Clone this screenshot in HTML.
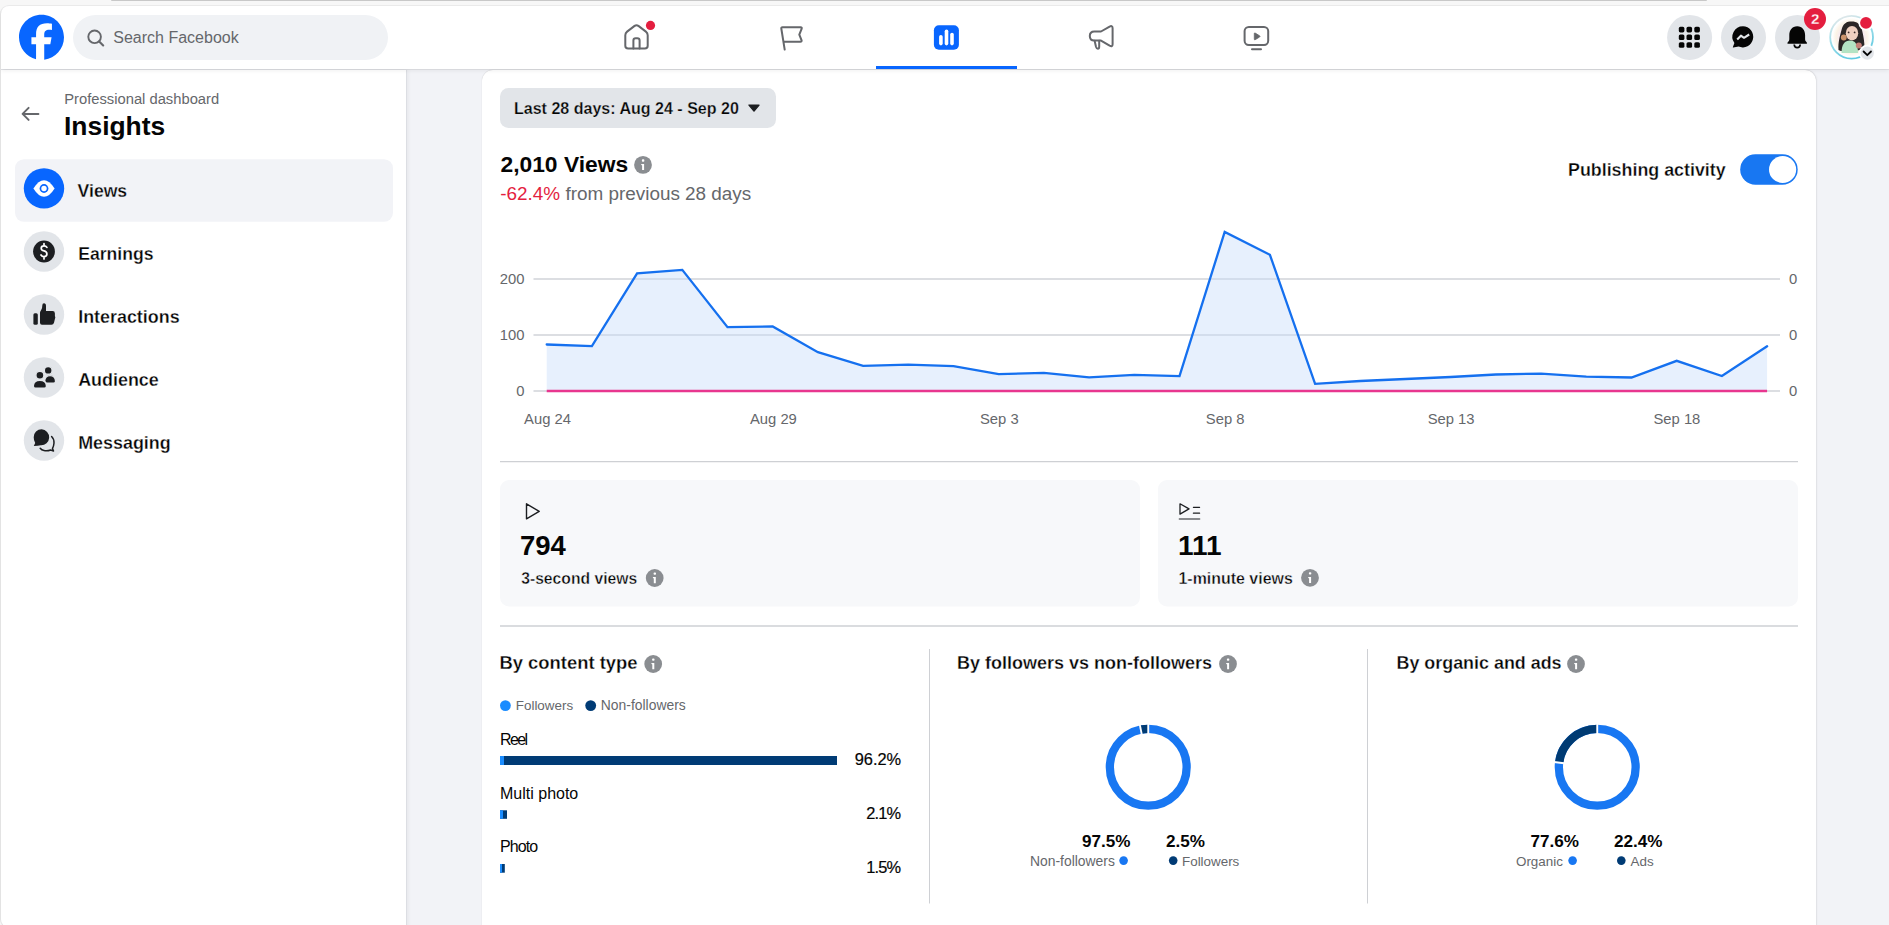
<!DOCTYPE html>
<html><head><meta charset="utf-8">
<style>
*{margin:0;padding:0;box-sizing:border-box}
html,body{width:1889px;height:925px;overflow:hidden}
body{background:#f7f7f7;font-family:"Liberation Sans",sans-serif;color:#050505;position:relative}
.a{position:absolute}
.t{position:absolute;white-space:nowrap;line-height:1}
</style></head><body>
<!-- browser frame -->
<div class="a" style="left:0;top:0;width:1889px;height:6px;background:#f7f7f7"></div>
<div class="a" style="left:110.6px;top:0;width:1596px;height:1.2px;background:#c8c8c8;border-radius:0 0 1.5px 1.5px"></div>
<div class="a" style="left:0;top:5px;width:1900px;height:924px;border-left:1px solid #e6e6e6;border-top:1px solid #ebebeb;border-bottom:1px solid #e6e6e6;border-top-left-radius:9px;border-bottom-left-radius:10px;background:#f2f3f7;overflow:hidden">
</div>

<!-- header -->
<div id="hdr" class="a" style="left:1px;top:6px;width:1888px;height:63px;background:#fff;border-top-left-radius:8px;box-shadow:0 0.6px 0 rgba(0,0,0,0.13), 0 2px 4px rgba(0,0,0,0.06);z-index:10"></div>


<!-- header content -->
<svg class="a" style="left:0;top:0;z-index:11" width="1889" height="70" viewBox="0 0 1889 70">
  <g transform="translate(19,14.8) scale(1.25)">
    <path d="M20.181 35.87C29.094 34.791 36 27.202 36 18c0-9.941-8.059-18-18-18S0 8.059 0 18c0 8.442 5.811 15.526 13.652 17.471L14 34h5.5l.681 1.87Z" fill="#0866FF"/>
    <path d="M13.651 35.471v-11.97H9.936V18h3.715v-2.37c0-6.127 2.772-8.964 8.784-8.964 1.138 0 3.103.223 3.91.446v4.983c-.425-.043-1.167-.065-2.081-.065-2.952 0-4.09 1.116-4.09 4.025V18h5.883l-1.008 5.5h-4.867v12.37a18.183 18.183 0 0 1-6.53-.399Z" fill="#fff"/>
  </g>
  <rect x="73" y="15" width="315" height="45" rx="22.5" fill="#f0f2f5"/>
  <circle cx="94.6" cy="36.8" r="6.3" fill="none" stroke="#65676b" stroke-width="1.9"/>
  <line x1="99.2" y1="41.4" x2="103.2" y2="45.4" stroke="#65676b" stroke-width="2.1" stroke-linecap="round"/>
  <!-- house -->
  <g fill="none" stroke="#65676b" stroke-width="2" stroke-linejoin="round" stroke-linecap="round">
    <path d="M625.3,45.8 V35.2 Q625.3,33 627.1,31.6 L634.6,25.9 Q636.5,24.5 638.4,25.9 L645.9,31.6 Q647.7,33 647.7,35.2 V45.8 Q647.7,48.6 644.9,48.6 H628.1 Q625.3,48.6 625.3,45.8 Z"/>
    <path d="M633.4,48.6 V40.6 Q633.4,38.3 635.7,38.3 H637.3 Q639.6,38.3 639.6,40.6 V48.6"/>
    <path d="M784.7,49.6 L781.3,28.5 Q781.1,27.2 782.4,27.2 H800.6 Q802.1,27.3 801.7,28.7 L799.3,34.6 L801.6,40.3 Q801.9,41.8 800.4,41.8 H783.5"/>
    <path d="M1101,31.5 H1094.3 Q1089.8,31.5 1089.8,36 Q1089.8,40.6 1094.3,40.6 H1101 L1109.6,45.7 Q1112.6,47.3 1112.6,44.2 V28.3 Q1112.6,25.1 1109.6,26.6 Z"/>
    <path d="M1094.6,40.8 L1096,46.8 Q1096.6,48.8 1097.9,48.8 Q1099.2,48.8 1099.2,46.8 V40.8"/>
    <rect x="1244.6" y="26.9" width="23.6" height="18.1" rx="4.2"/>
    <line x1="1252" y1="49.3" x2="1261" y2="49.3"/>
  </g>
  <path d="M1254.3,33.6 Q1254.3,32.6 1255.2,33.1 L1259.6,35.8 Q1260.4,36.4 1259.6,37 L1255.2,39.7 Q1254.3,40.2 1254.3,39.2 Z" fill="#65676b" stroke="#65676b" stroke-width="0.8" stroke-linejoin="round"/>
  <circle cx="650.5" cy="25.4" r="4.6" fill="#e41e3f"/>
  <!-- insights -->
  <rect x="933.9" y="25.2" width="25" height="24.5" rx="5" fill="#0866ff"/>
  <g stroke="#fff" stroke-width="3.6" stroke-linecap="round">
    <line x1="940.9" y1="36.8" x2="940.9" y2="43.6"/>
    <line x1="946.5" y1="31.3" x2="946.5" y2="43.6"/>
    <line x1="952" y1="34.6" x2="952" y2="43.6"/>
  </g>
  <rect x="876" y="66" width="141" height="3" fill="#0866ff"/>
  <!-- right circles -->
  <circle cx="1689.6" cy="37.4" r="22.5" fill="#e2e5e9"/>
  <circle cx="1743.5" cy="37.4" r="22.5" fill="#e2e5e9"/>
  <circle cx="1797.5" cy="37.4" r="22.5" fill="#e2e5e9"/>
  <g fill="#050505">
    <rect x="1678.8" y="26.8" width="5.6" height="5.6" rx="1.6"/><rect x="1686.5" y="26.8" width="5.6" height="5.6" rx="1.6"/><rect x="1694.3" y="26.8" width="5.6" height="5.6" rx="1.6"/>
    <rect x="1678.8" y="34.5" width="5.6" height="5.6" rx="1.6"/><rect x="1686.5" y="34.5" width="5.6" height="5.6" rx="1.6"/><rect x="1694.3" y="34.5" width="5.6" height="5.6" rx="1.6"/>
    <rect x="1678.8" y="42.2" width="5.6" height="5.6" rx="1.6"/><rect x="1686.5" y="42.2" width="5.6" height="5.6" rx="1.6"/><rect x="1694.3" y="42.2" width="5.6" height="5.6" rx="1.6"/>
  </g>
  <path d="M1743,26.2 A10.6,10.6 0 1 1 1738.6,46.6 L1733.3,47.6 Q1732.6,47.6 1732.9,46.9 L1734.4,43 A10.6,10.6 0 0 1 1743,26.2 Z" fill="#050505"/>
  <path d="M1737.2,39.5 L1740.9,35.7 L1744,37.8 L1749.2,34.5" fill="none" stroke="#e2e5e9" stroke-width="2.1" stroke-linejoin="round" stroke-linecap="butt"/>
  <path d="M1797.2,26.2 C1792,26.2 1789.3,30.5 1789.3,35 V39.3 Q1789.3,40.8 1788.2,41.8 L1787.6,42.4 Q1786.6,43.8 1788.3,43.8 H1806.1 Q1807.8,43.8 1806.8,42.4 L1806.2,41.8 Q1805.1,40.8 1805.1,39.3 V35 C1805.1,30.5 1802.4,26.2 1797.2,26.2 Z" fill="#050505"/>
  <path d="M1794.2,44.5 Q1794.4,47.6 1797.2,47.6 Q1800,47.6 1800.2,44.5" fill="none" stroke="#050505" stroke-width="1.7"/>
  <circle cx="1815" cy="19" r="11" fill="#e41e3f"/>
  <text x="1815.3" y="24.4" text-anchor="middle" font-family="Liberation Sans" font-weight="bold" font-size="15.2" fill="#fff" stroke="#e41e3f" stroke-width="0.3">2</text>
  <!-- avatar -->
  <defs>
    <linearGradient id="ring" x1="0.2" y1="0" x2="0.6" y2="1">
      <stop offset="0" stop-color="#e6e9ea"/><stop offset="0.45" stop-color="#9fdde9"/><stop offset="1" stop-color="#5cc8e0"/>
    </linearGradient>
    <radialGradient id="avbg" cx="0.5" cy="0.5" r="0.5">
      <stop offset="0.55" stop-color="#f6e6f4"/><stop offset="0.8" stop-color="#fbf3e6"/><stop offset="1" stop-color="#ffffff"/>
    </radialGradient>
    <clipPath id="avclip"><circle cx="1851.6" cy="37.3" r="19.5"/></clipPath>
  </defs>
  <circle cx="1851.6" cy="37.3" r="21.4" fill="#fff" stroke="url(#ring)" stroke-width="1.8"/>
  <g clip-path="url(#avclip)">
    <circle cx="1851.6" cy="37.3" r="19.5" fill="url(#avbg)"/>
    <path d="M1838.5,50 C1838,42 1840,36 1841.5,30 C1843,23 1847,21.5 1851.5,21.5 C1857,21.5 1860.5,24 1862,30 C1863.5,36 1864.5,42 1864.5,48 C1862,50 1856,51 1851,51 C1845,51 1840.5,51.5 1838.5,50 Z" fill="#2b2626"/>
    <ellipse cx="1852" cy="33.2" rx="6.2" ry="7.3" fill="#eecfbf"/>
    <circle cx="1848.6" cy="32.4" r="0.9" fill="#3a2a2a"/>
    <circle cx="1854.6" cy="32.4" r="0.9" fill="#3a2a2a"/>
    <path d="M1841.5,53 C1841.5,44 1845,40.5 1850,40.5 C1855,40.5 1858,44 1858,53 Z" fill="#b3e3c4"/>
    <circle cx="1843.8" cy="37.5" r="2.9" fill="#c9926b"/>
    <circle cx="1858.8" cy="45.5" r="3" fill="#c47f78"/>
  </g>
  <circle cx="1866" cy="22.8" r="7.6" fill="#fff"/>
  <circle cx="1866" cy="22.8" r="5.9" fill="#e41e3f"/>
  <circle cx="1867.3" cy="53.1" r="8.4" fill="#fff"/>
  <circle cx="1867.3" cy="53.1" r="6.6" fill="#e2e5e9"/>
  <path d="M1863.6,51.5 L1867.3,55.2 L1871,51.5" fill="none" stroke="#050505" stroke-width="1.8" stroke-linecap="round" stroke-linejoin="round"/>
</svg>
<div class="t" style="z-index:11;left:113.3px;top:30px;font-size:16px;color:#65676b">Search Facebook</div>


<!-- sidebar -->
<div class="a" style="left:1px;top:70px;width:406px;height:858px;border-bottom-left-radius:9px;background:#fff;border-right:1px solid #dcdee3;box-shadow:1px 0 4px rgba(0,0,0,0.06)"></div>
<svg class="a" style="left:0;top:70px" width="406" height="400" viewBox="0 70 406 400">
  <path d="M38.4,113.9 H23 M28.6,107.9 L22.6,113.9 L28.6,119.9" fill="none" stroke="#65676b" stroke-width="2" stroke-linecap="round" stroke-linejoin="round"/>
  <rect x="15" y="159.2" width="378" height="62.6" rx="9" fill="#f2f3f7"/>
  <circle cx="44" cy="188.4" r="20.2" fill="#0866ff"/>
  <path d="M33.4,188.5 Q38.6,180.2 44,180.2 Q49.4,180.2 54.6,188.5 Q49.4,196.8 44,196.8 Q38.6,196.8 33.4,188.5 Z" fill="#fff"/>
  <circle cx="44" cy="188.5" r="4.4" fill="#0866ff"/>
  <circle cx="44" cy="188.5" r="2.7" fill="#fff"/>
  <circle cx="44" cy="251.5" r="20.2" fill="#e2e5e9"/>
  <circle cx="44" cy="251.5" r="10.9" fill="#1c1e21"/>
  <path d="M46.9,247.4 Q46,245.8 44,245.8 Q41.2,245.8 41.2,248.2 Q41.2,250.2 44,250.9 Q46.9,251.6 46.9,254 Q46.9,256.6 44,256.6 Q41.9,256.6 41,255 M44,243.6 V245.8 M44,256.6 V258.9" fill="none" stroke="#fff" stroke-width="1.7" stroke-linecap="round"/>
  <circle cx="44" cy="314.5" r="20.2" fill="#e2e5e9"/>
  <g fill="#1c1e21">
    <rect x="33.4" y="313.3" width="4.4" height="11.4" rx="1.5"/>
    <path d="M40,313.5 Q40,311.5 41.4,309.5 Q42.3,308 42.3,305.5 Q42.3,303.2 44,303.2 Q46,303.2 46,306 V311.1 H52.6 Q54.9,311.1 54.9,313.4 V316 Q55.8,317.5 54.9,319 L54,322.8 Q53.4,324.7 51.5,324.7 H42 Q40,324.7 40,322.7 Z"/>
  </g>
  <circle cx="44" cy="377.5" r="20.2" fill="#e2e5e9"/>
  <g fill="#1c1e21" stroke="#e2e5e9" stroke-width="1.4">
    <circle cx="48.2" cy="370.4" r="3.9"/>
    <path d="M44.6,381.2 Q45,375.6 50,375.6 Q55.3,375.6 55.6,381.2 Q55.6,383.3 53.5,383.3 H46.8 Q44.6,383.3 44.6,381.2 Z"/>
    <circle cx="39.9" cy="375.3" r="4"/>
    <path d="M33.3,386 Q33.6,380.3 39.9,380.3 Q46.2,380.3 46.5,386 Q46.5,388.2 44.3,388.2 H35.5 Q33.3,388.2 33.3,386 Z"/>
  </g>
  <circle cx="44" cy="440.5" r="20.2" fill="#e2e5e9"/>
  <path d="M51.6,436.5 Q54.2,439 54,443 Q53.7,446.5 52.5,448.5 L53.5,451 L50.6,450 Q47.5,451.2 44,450.6 Q41.6,450.2 40.2,448.3" fill="none" stroke="#1c1e21" stroke-width="1.5" stroke-linejoin="round" stroke-linecap="round"/>
  <path d="M41.6,429.3 A7.9,7.9 0 1 1 40.8,445.2 Q38,445.7 33.8,445.9 L35.2,443 Q33.7,440.7 33.7,437.2 A7.9,7.9 0 0 1 41.6,429.3 Z" fill="#1c1e21"/>
</svg>
<div class="t" style="left:64.2px;top:92px;font-size:14.75px;color:#65676b">Professional dashboard</div>
<div class="t" style="left:64px;top:113.2px;font-size:26.4px;font-weight:bold;color:#050505">Insights</div>
<div class="t" style="left:77.6px;top:183.3px;font-size:17.6px;font-weight:bold;color:#050505;-webkit-text-stroke:0.28px #f2f3f7">Views</div>
<div class="t" style="left:78.2px;top:246.3px;font-size:17.6px;font-weight:bold;color:#050505;-webkit-text-stroke:0.28px #fff">Earnings</div>
<div class="t" style="left:78.2px;top:309.3px;font-size:17.9px;font-weight:bold;color:#050505;-webkit-text-stroke:0.28px #fff">Interactions</div>
<div class="t" style="left:78.2px;top:372.3px;font-size:17.9px;font-weight:bold;color:#050505;-webkit-text-stroke:0.28px #fff">Audience</div>
<div class="t" style="left:78.2px;top:435.3px;font-size:17.9px;font-weight:bold;color:#050505;-webkit-text-stroke:0.28px #fff">Messaging</div>


<!-- card -->
<div class="a" style="left:481.5px;top:69.5px;width:1334.5px;height:900px;background:#fff;border-radius:11px;box-shadow:0 0 1px rgba(0,0,0,0.22), 1px 0 2px rgba(0,0,0,0.06)"></div>
<svg class="a" style="left:0;top:0" width="1889" height="925" viewBox="0 0 1889 925">
  <rect x="500" y="88" width="276" height="40" rx="8.5" fill="#e2e5e9"/>
  <path d="M749,105.1 H759 L754,111 Z" fill="#1c1e21" stroke="#1c1e21" stroke-width="1.4" stroke-linejoin="round"/>
  <g><circle cx="643" cy="164.9" r="8.9" fill="#8a8d91"/><rect x="641.9" y="159.3" width="2.4" height="2.4" rx="0.8" fill="#fff"/><path d="M641.1,164.0 H644.1 V170.1 H642.1 V165.5 Q641.1,165.20000000000002 641.1,164.0 Z" fill="#fff"/></g>
  <rect x="1740.2" y="154.2" width="57.5" height="30.5" rx="15.25" fill="#1877f2"/>
  <circle cx="1782.6" cy="169.5" r="13.6" fill="#fff"/>
  <line x1="500" y1="461.6" x2="1798" y2="461.6" stroke="#ced0d4" stroke-width="1.3"/>
  <rect x="500" y="480" width="640" height="126.5" rx="9" fill="#f7f8fa"/>
  <rect x="1158" y="480" width="640" height="126.5" rx="9" fill="#f7f8fa"/>
  <path d="M526.5,503.8 L539.2,511.4 L526.5,518.8 Z" fill="none" stroke="#1c1e21" stroke-width="1.4" stroke-linejoin="round"/>
  <path d="M1180,503.8 L1189,508.9 L1180,514.1 Z" fill="none" stroke="#1c1e21" stroke-width="1.3" stroke-linejoin="round"/>
  <path d="M1193.4,507.3 H1199.6 M1193.4,513.2 H1199.6" stroke="#1c1e21" stroke-width="1.2" stroke-linecap="round"/>
  <path d="M1179.4,519 H1199.6" stroke="#65676b" stroke-width="1.6" stroke-linecap="round"/>
  <g><circle cx="654.7" cy="578" r="8.9" fill="#8a8d91"/><rect x="653.6" y="572.4" width="2.4" height="2.4" rx="0.8" fill="#fff"/><path d="M652.8000000000001,577.1 H655.8000000000001 V583.2 H653.8000000000001 V578.6 Q652.8000000000001,578.3 652.8000000000001,577.1 Z" fill="#fff"/></g>
  <g><circle cx="1310" cy="577.8" r="8.9" fill="#8a8d91"/><rect x="1308.9" y="572.1999999999999" width="2.4" height="2.4" rx="0.8" fill="#fff"/><path d="M1308.1,576.9 H1311.1 V583.0 H1309.1 V578.4 Q1308.1,578.0999999999999 1308.1,576.9 Z" fill="#fff"/></g>
  <line x1="500" y1="626" x2="1798" y2="626" stroke="#ced0d4" stroke-width="1.7"/>
  <g><circle cx="653.2" cy="664" r="8.9" fill="#8a8d91"/><rect x="652.1" y="658.4" width="2.4" height="2.4" rx="0.8" fill="#fff"/><path d="M651.3000000000001,663.1 H654.3000000000001 V669.2 H652.3000000000001 V664.6 Q651.3000000000001,664.3 651.3000000000001,663.1 Z" fill="#fff"/></g>
  <g><circle cx="1228" cy="664" r="8.9" fill="#8a8d91"/><rect x="1226.9" y="658.4" width="2.4" height="2.4" rx="0.8" fill="#fff"/><path d="M1226.1,663.1 H1229.1 V669.2 H1227.1 V664.6 Q1226.1,664.3 1226.1,663.1 Z" fill="#fff"/></g>
  <g><circle cx="1576" cy="664" r="8.9" fill="#8a8d91"/><rect x="1574.9" y="658.4" width="2.4" height="2.4" rx="0.8" fill="#fff"/><path d="M1574.1,663.1 H1577.1 V669.2 H1575.1 V664.6 Q1574.1,664.3 1574.1,663.1 Z" fill="#fff"/></g>
  <line x1="929.5" y1="649" x2="929.5" y2="903.5" stroke="#ced0d4" stroke-width="1"/>
  <line x1="1367.5" y1="649" x2="1367.5" y2="903.5" stroke="#ced0d4" stroke-width="1"/>
  <circle cx="505.4" cy="705.6" r="5.4" fill="#1a8cff"/>
  <circle cx="590.7" cy="705.6" r="5.4" fill="#003b75"/>
  <rect x="500" y="756" width="337" height="9" fill="#003b75"/>
  <rect x="500" y="756" width="4" height="9" fill="#1a8cff"/>
  <rect x="500" y="810.3" width="7" height="8.5" fill="#003b75"/>
  <rect x="500" y="810.3" width="3" height="8.5" fill="#1a8cff"/>
  <rect x="500" y="864" width="4.8" height="8.7" fill="#003b75"/>
  <rect x="500" y="864" width="2" height="8.7" fill="#1a8cff"/>
  <circle cx="1123.6" cy="860.6" r="4.3" fill="#1877f2"/>
  <circle cx="1173.2" cy="860.6" r="4.3" fill="#003b75"/>
  <circle cx="1572.6" cy="860.6" r="4.3" fill="#1877f2"/>
  <circle cx="1621.3" cy="860.6" r="4.3" fill="#003b75"/>
</svg>
<div class="t" style="left:514px;top:99.8px;font-size:16.05px;font-weight:bold;-webkit-text-stroke:0.25px #e2e5e9">Last 28 days: Aug 24 - Sep 20</div>
<div class="t" style="left:500.5px;top:152.9px;font-size:22.8px;font-weight:bold">2,010 Views</div>
<div class="t" style="left:500.3px;top:184.5px;font-size:18.9px;color:#65676b"><span style="color:#e41e3f">-62.4%</span> from previous 28 days</div>
<div class="t" style="left:1568px;top:161.5px;font-size:17.85px;font-weight:bold;-webkit-text-stroke:0.28px #fff">Publishing activity</div>
<div class="t" style="left:520px;top:531.7px;font-size:27.5px;font-weight:bold">794</div>
<div class="t" style="left:521.2px;top:570.5px;font-size:15.7px;font-weight:bold;-webkit-text-stroke:0.38px #f7f8fa">3-second views</div>
<div class="t" style="left:1178px;top:531.8px;font-size:28px;font-weight:bold">111</div>
<div class="t" style="left:1178.5px;top:570.5px;font-size:15.95px;font-weight:bold;-webkit-text-stroke:0.38px #f7f8fa">1-minute views</div>
<div class="t" style="left:499.5px;top:653.7px;font-size:18.4px;font-weight:bold;-webkit-text-stroke:0.28px #fff">By content type</div>
<div class="t" style="left:957px;top:653.7px;font-size:18px;font-weight:bold;-webkit-text-stroke:0.28px #fff">By followers vs non-followers</div>
<div class="t" style="left:1396.5px;top:654.5px;font-size:17.9px;font-weight:bold;-webkit-text-stroke:0.28px #fff">By organic and ads</div>
<div class="t" style="left:515.8px;top:699.4px;font-size:13.4px;color:#65676b">Followers</div>
<div class="t" style="left:600.8px;top:699.4px;font-size:13.9px;color:#65676b">Non-followers</div>
<div class="t" style="left:500px;top:731.7px;font-size:16px;letter-spacing:-1.6px">Reel</div>
<div class="t" style="left:500px;top:785.6px;font-size:16px">Multi photo</div>
<div class="t" style="left:500px;top:839.3px;font-size:16px;letter-spacing:-0.9px">Photo</div>
<div class="t" style="right:987.8px;top:751px;font-size:16.4px;-webkit-text-stroke:0.2px #050505">96.2%</div>
<div class="t" style="right:988.6px;top:805px;font-size:16.4px;-webkit-text-stroke:0.2px #050505;letter-spacing:-0.8px">2.1%</div>
<div class="t" style="right:988.6px;top:859px;font-size:16.4px;-webkit-text-stroke:0.2px #050505;letter-spacing:-0.8px">1.5%</div>
<div class="t" style="left:1082px;top:833.1px;font-size:17.1px;font-weight:bold">97.5%</div>
<div class="t" style="left:1166px;top:833.1px;font-size:17.1px;font-weight:bold">2.5%</div>
<div class="t" style="left:1030px;top:854.8px;font-size:13.9px;color:#65676b">Non-followers</div>
<div class="t" style="left:1182px;top:854.8px;font-size:13.4px;color:#65676b">Followers</div>
<div class="t" style="left:1530.5px;top:833.1px;font-size:17.1px;font-weight:bold">77.6%</div>
<div class="t" style="left:1614px;top:833.1px;font-size:17.1px;font-weight:bold">22.4%</div>
<div class="t" style="left:1516px;top:854.8px;font-size:13.4px;color:#65676b">Organic</div>
<div class="t" style="left:1630.5px;top:854.8px;font-size:13.4px;color:#65676b">Ads</div>

<svg class="a" style="left:0;top:0" width="1889" height="925" viewBox="0 0 1889 925">
  <g stroke="#d0d3d9" stroke-width="1.6">
    <line x1="533.5" y1="279" x2="1780" y2="279"/>
    <line x1="533.5" y1="335" x2="1780" y2="335"/>
    <line x1="533.5" y1="391" x2="1780" y2="391"/>
  </g>
  <path d="M546.7,344.5 L591.9,346.2 L637.1,273.4 L682.3,269.9 L727.5,327.1 L772.7,326.4 L817.9,352.2 L863.1,365.9 L908.3,364.6 L953.5,366.1 L998.7,374.1 L1043.9,372.9 L1089.1,377.3 L1134.3,374.8 L1179.5,376.1 L1224.7,231.9 L1269.9,254.8 L1315.1,383.8 L1360.3,381.0 L1405.5,379.0 L1450.7,377.0 L1495.9,374.5 L1541.1,373.6 L1586.3,376.6 L1631.5,377.5 L1676.7,360.8 L1721.9,376.0 L1767.1,346.3 L1767.1,391 L546.7,391 Z" fill="#e7f0fd"/>
  <defs><clipPath id="areaclip"><path d="M546.7,344.5 L591.9,346.2 L637.1,273.4 L682.3,269.9 L727.5,327.1 L772.7,326.4 L817.9,352.2 L863.1,365.9 L908.3,364.6 L953.5,366.1 L998.7,374.1 L1043.9,372.9 L1089.1,377.3 L1134.3,374.8 L1179.5,376.1 L1224.7,231.9 L1269.9,254.8 L1315.1,383.8 L1360.3,381.0 L1405.5,379.0 L1450.7,377.0 L1495.9,374.5 L1541.1,373.6 L1586.3,376.6 L1631.5,377.5 L1676.7,360.8 L1721.9,376.0 L1767.1,346.3 L1767.1,391 L546.7,391 Z"/></clipPath></defs>
  <g stroke="#b9c3d3" stroke-width="1.3" opacity="0.55" clip-path="url(#areaclip)">
    <line x1="546.7" y1="279" x2="1767.1" y2="279"/>
    <line x1="546.7" y1="335" x2="1767.1" y2="335"/>
  </g>
  <path d="M546.7,344.5 L591.9,346.2 L637.1,273.4 L682.3,269.9 L727.5,327.1 L772.7,326.4 L817.9,352.2 L863.1,365.9 L908.3,364.6 L953.5,366.1 L998.7,374.1 L1043.9,372.9 L1089.1,377.3 L1134.3,374.8 L1179.5,376.1 L1224.7,231.9 L1269.9,254.8 L1315.1,383.8 L1360.3,381.0 L1405.5,379.0 L1450.7,377.0 L1495.9,374.5 L1541.1,373.6 L1586.3,376.6 L1631.5,377.5 L1676.7,360.8 L1721.9,376.0 L1767.1,346.3" fill="none" stroke="#1570ef" stroke-width="2.3" stroke-linejoin="miter" stroke-linecap="round"/>
  <line x1="546.7" y1="391" x2="1767.1" y2="391" stroke="#e8368f" stroke-width="2.6"/>
  <g font-family="Liberation Sans" font-size="14.8" fill="#65676b">
    <text x="524.5" y="284.3" text-anchor="end">200</text>
    <text x="524.5" y="340.3" text-anchor="end">100</text>
    <text x="524.5" y="396.3" text-anchor="end">0</text>
    <text x="1789" y="284.3">0</text>
    <text x="1789" y="340.3">0</text>
    <text x="1789" y="396.3">0</text>
    <text x="547.5" y="423.8" text-anchor="middle">Aug 24</text><text x="773.4" y="423.8" text-anchor="middle">Aug 29</text><text x="999.3" y="423.8" text-anchor="middle">Sep 3</text><text x="1225.2" y="423.8" text-anchor="middle">Sep 8</text><text x="1451.1" y="423.8" text-anchor="middle">Sep 13</text><text x="1676.9" y="423.8" text-anchor="middle">Sep 18</text>
  </g>
  <circle cx="1148.25" cy="767.3" r="38.4" fill="none" stroke="#1877f2" stroke-width="8.3"/><path d="M1140.79,729.63 A38.4,38.4 0 0 1 1148.25,728.90" fill="none" stroke="#003b73" stroke-width="8.3"/><line x1="1141.74" y1="734.44" x2="1139.80" y2="724.63" stroke="#fff" stroke-width="1.9"/><line x1="1148.25" y1="733.80" x2="1148.25" y2="723.80" stroke="#fff" stroke-width="1.9"/>
  <circle cx="1597.25" cy="767.3" r="38.4" fill="none" stroke="#1877f2" stroke-width="8.3"/><path d="M1559.14,762.62 A38.4,38.4 0 0 1 1597.25,728.90" fill="none" stroke="#003b73" stroke-width="8.3"/><line x1="1564.00" y1="763.22" x2="1554.07" y2="762.00" stroke="#fff" stroke-width="1.9"/><line x1="1597.25" y1="733.80" x2="1597.25" y2="723.80" stroke="#fff" stroke-width="1.9"/>
</svg>

</body></html>
